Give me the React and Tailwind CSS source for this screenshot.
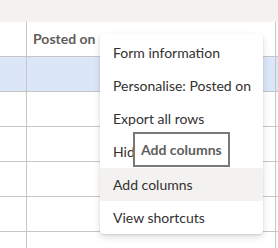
import React from 'react';

const rows = [0, 1, 2, 3, 4, 5];

const menuItems = [
  'Form information',
  'Personalise: Posted on',
  'Export all rows',
  'Hide column',
  'Add columns',
  'View shortcuts',
];

const Row = ({ header, selected, children }) => (
  <div className={`flex h-[35px] border-b border-[#c8c6c4] ${selected ? 'bg-[#dbe6f9]' : 'bg-white'}`}>
    <div className="w-[27px] shrink-0 border-r border-[#c8c6c4]" />
    <div className="w-[249px] shrink-0 border-r border-[#c8c6c4] flex items-center pl-[6px]">
      {header && children}
    </div>
    <div className="flex-1" />
  </div>
);

export default function App() {
  return (
    <div className="relative w-[278px] h-[248px] overflow-hidden bg-white" style={{ fontFamily: 'Lato, "Noto Sans", sans-serif' }}>
      <div className="h-[22px] bg-[#f3f2f1]" />
      <Row header>
        <span className="text-[14px] font-bold text-[#605e5c] leading-none">Posted on</span>
      </Row>
      {rows.map((r) => (
        <Row key={r} selected={r === 0} />
      ))}

      <div className="absolute left-[100px] top-[34px] w-[163px] bg-white rounded-[4px] pt-[2px] shadow-[0_3px_7px_rgba(0,0,0,0.13),0_1px_2px_rgba(0,0,0,0.11)]">
        {menuItems.map((item) => (
          <div
            key={item}
            className={`h-[33px] flex items-center pl-[13px] text-[14px] text-[#323130] whitespace-nowrap rounded-[2px] ${item === 'Add columns' ? 'bg-[#f3f2f1]' : ''}`}
          >
            {item}
          </div>
        ))}
      </div>

      <div className="absolute left-[133px] top-[132px] h-[35px] px-[6px] flex items-center bg-white border-2 border-[#7a7876] text-[14px] font-bold text-[#605e5c] whitespace-nowrap">
        Add columns
      </div>
    </div>
  );
}
